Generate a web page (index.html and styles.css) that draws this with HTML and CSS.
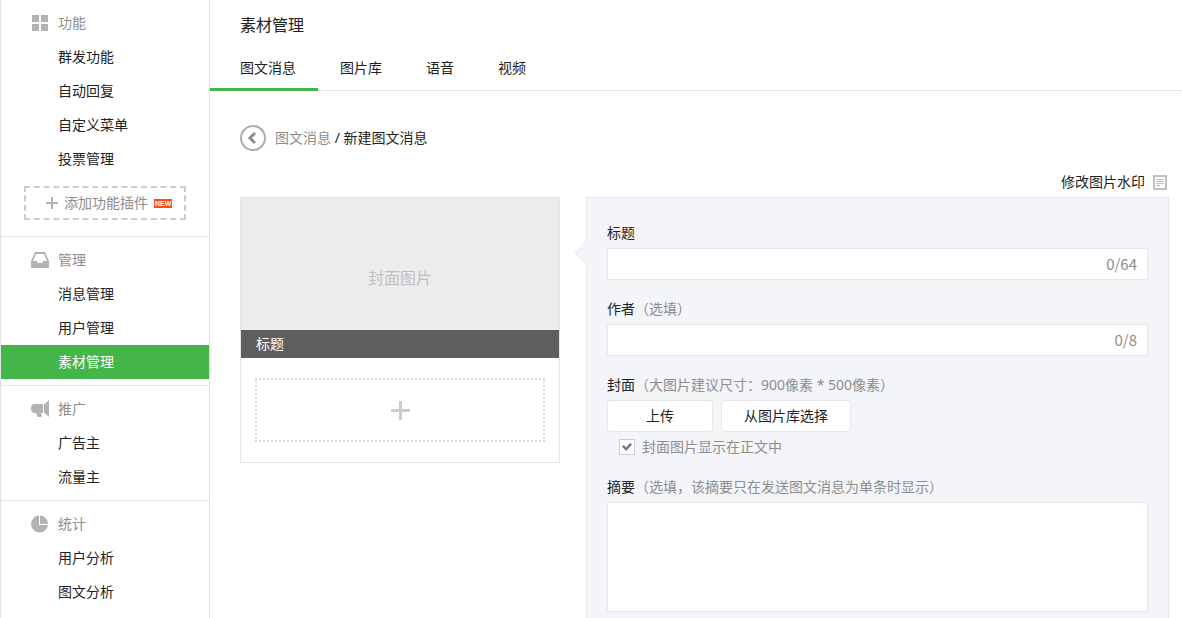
FILE: index.html
```html
<!DOCTYPE html>
<html lang="zh-CN">
<head>
<meta charset="utf-8">
<title>素材管理</title>
<meta name="viewport" content="width=device-width, initial-scale=1">
<link rel="stylesheet" href="styles.css">
</head>
<body>
<div class="layout">
  <nav class="sidebar" aria-label="主菜单">
    <section class="menu">
      <h2 class="menu-title">
        <svg class="menu-icon" viewBox="0 0 18 18" aria-hidden="true"><path d="M1 1h7v7H1zM10 1h7v7h-7zM1 10h7v7H1zM10 10h7v7h-7z"/></svg>功能
      </h2>
      <a class="menu-item" href="#">群发功能</a>
      <a class="menu-item" href="#">自动回复</a>
      <a class="menu-item" href="#">自定义菜单</a>
      <a class="menu-item" href="#">投票管理</a>
      <a class="plugin" href="#">
        <svg class="plugin-plus" viewBox="0 0 12 12" aria-hidden="true"><path d="M5 0h2v5h5v2H7v5H5V7H0V5h5z"/></svg>
        <span>添加功能插件</span>
        <span class="badge">NEW</span>
      </a>
    </section>
    <section class="menu">
      <h2 class="menu-title">
        <svg class="menu-icon" viewBox="0 0 18 18" aria-hidden="true"><path fill-rule="evenodd" d="M4 1h10l4 9v7H0v-7zM5 3L2 10h3.500l1.500 2h4l1.500-2H16l-3-7z"/></svg>管理
      </h2>
      <a class="menu-item" href="#">消息管理</a>
      <a class="menu-item" href="#">用户管理</a>
      <a class="menu-item active" href="#" aria-current="page">素材管理</a>
    </section>
    <section class="menu">
      <h2 class="menu-title">
        <svg class="menu-icon" viewBox="0 0 18 18" aria-hidden="true"><path d="M3 4h9v9h-2l1 4H7l-2-4H3C1 12.500 0 11 0 8.500S1 4.500 3 4zM13 4.500L17 1l1-1v17l-1-1-4-3.500z"/></svg>推广
      </h2>
      <a class="menu-item" href="#">广告主</a>
      <a class="menu-item" href="#">流量主</a>
    </section>
    <section class="menu">
      <h2 class="menu-title">
        <svg class="menu-icon" viewBox="0 0 18 18" aria-hidden="true"><path d="M8 .500v9.500h9A8.500 8.500 0 1 1 8 .500zM9 .500A8.500 8.500 0 0 1 17 9H9z"/></svg>统计
      </h2>
      <a class="menu-item" href="#">用户分析</a>
      <a class="menu-item" href="#">图文分析</a>
    </section>
  </nav>

  <main class="main">
    <header class="header">
      <h1 class="page-title">素材管理</h1>
      <nav class="tabs" aria-label="素材类型">
        <a class="tab current" href="#" aria-current="page">图文消息</a>
        <a class="tab" href="#">图片库</a>
        <a class="tab" href="#">语音</a>
        <a class="tab" href="#">视频</a>
      </nav>
    </header>

    <div class="content">
      <div class="breadcrumb">
        <a class="back" href="#" aria-label="返回">
          <svg viewBox="0 0 26 26" aria-hidden="true"><circle cx="13" cy="13" r="12"/><path class="chevron" d="M15 8l-5 5 5 5"/></svg>
        </a>
        <p class="crumbs"><a href="#">图文消息</a> / 新建图文消息</p>
      </div>

      <div class="watermark">
        <a href="#">修改图片水印</a>
        <svg class="doc" viewBox="0 0 14 15" aria-hidden="true"><path class="frame" d="M1 1h12v13H1z"/><path class="rows" d="M3 4.500h8M3 6.500h8M3 8.500h8M3 10.500h4"/></svg>
      </div>

      <div class="editor">
        <section class="card" aria-label="预览">
          <div class="cover">封面图片</div>
          <h3 class="card-title">标题</h3>
          <button class="add" type="button" aria-label="添加一条图文">
            <svg viewBox="0 0 19 19" aria-hidden="true"><path d="M8 0h3v8h8v3h-8v8H8v-8H0V8h8z"/></svg>
          </button>
        </section>

        <form class="panel">
          <svg class="arrow" viewBox="0 0 13 24" aria-hidden="true"><path class="arrow-fill" d="M13 0L1 12l12 12z"/><path class="arrow-line" d="M12.500 .500L1 12l11.500 11.500"/></svg>
          <div class="field">
            <label class="label" for="title">标题</label>
            <div class="box"><input id="title" type="text"><span class="count">0/64</span></div>
          </div>
          <div class="field">
            <label class="label" for="author">作者<span class="hint">（选填）</span></label>
            <div class="box"><input id="author" type="text"><span class="count">0/8</span></div>
          </div>
          <div class="field">
            <p class="label">封面<span class="hint">（大图片建议尺寸：900像素 * 500像素）</span></p>
            <div class="buttons">
              <button class="btn" type="button">上传</button>
              <button class="btn" type="button">从图片库选择</button>
            </div>
            <label class="check"><input type="checkbox" checked>封面图片显示在正文中</label>
          </div>
          <div class="field">
            <label class="label" for="summary">摘要<span class="hint">（选填，该摘要只在发送图文消息为单条时显示）</span></label>
            <textarea class="summary" id="summary"></textarea>
          </div>
        </form>
      </div>
    </div>
  </main>
</div>
</body>
</html>
```

FILE: styles.css
```css
* {
  box-sizing: border-box;
}

body,
h1,
h2,
h3,
p {
  margin: 0;
}

body {
  overflow: hidden;
  background: #fff;
  color: #222;
  font: 14px/22px "Noto Sans", "Noto Sans CJK SC", sans-serif;
}

h1,
h2,
h3 {
  font-weight: 400;
}

a {
  color: inherit;
  text-decoration: none;
}

button,
input,
textarea {
  font: inherit;
  color: inherit;
}

svg {
  display: block;
}

.layout {
  display: flex;
  height: 100vh;
  overflow: hidden;
}

/* Sidebar */
.sidebar {
  flex: 0 0 210px;
  border: solid #e1e1e4;
  border-width: 0 1px;
}

.menu {
  padding: 6px 0;
}

.menu + .menu {
  border-top: 1px solid #e7e7eb;
}

.menu-title {
  display: flex;
  align-items: center;
  gap: 9px;
  padding-left: 30px;
  color: #8d8d8d;
  font-size: 14px;
  line-height: 34px;
}

.menu-icon {
  width: 18px;
  height: 18px;
  fill: #b2b2b2;
}

.menu-item {
  display: block;
  padding-left: 57px;
  line-height: 34px;
}

.menu-item.active {
  background: #44b549;
  color: #fff;
}

.plugin {
  display: flex;
  align-items: center;
  gap: 6px;
  height: 34px;
  margin: 10px 23px;
  padding-left: 20px;
  border: 2px dashed #ccc;
  color: #8d8d8d;
}

.plugin-plus {
  width: 12px;
  height: 12px;
  fill: #b2b2b2;
}

.badge {
  padding: 0 1px;
  background: #ff4c13;
  color: #fff;
  font: bold 7px/9px "Liberation Sans", sans-serif;
}

/* Header */
.main {
  flex: 1;
  min-width: 0;
}

.header {
  padding-top: 12px;
  border-bottom: 1px solid #e7e7eb;
}

.page-title {
  padding-left: 30px;
  font-size: 16px;
  line-height: 26px;
}

.tabs {
  display: flex;
  margin: 10px 0 -1px;
}

.tab {
  padding: 0 22px;
  border-bottom: 3px solid transparent;
  line-height: 40px;
}

.tab.current {
  padding-left: 30px;
  border-color: #44b549;
}

/* Content */
.content {
  padding: 34px 13px 0 30px;
}

.breadcrumb {
  display: flex;
  align-items: center;
  gap: 9px;
}

.back svg {
  width: 26px;
  height: 26px;
  fill: none;
  stroke: #acadb0;
  stroke-width: 2;
}

.back .chevron {
  stroke: #8d8d8d;
  stroke-width: 3;
}

.crumbs a {
  color: #8d8d8d;
}

.watermark {
  display: flex;
  align-items: center;
  justify-content: flex-end;
  gap: 8px;
  padding: 20px 2px 4px 0;
}

.doc {
  width: 14px;
  height: 15px;
  fill: none;
  stroke: #c0c0c0;
}

.doc .frame {
  stroke-width: 2;
}

.editor {
  display: flex;
  align-items: flex-start;
  gap: 26px;
}

/* Preview card */
.card {
  display: flex;
  flex: 0 0 320px;
  flex-direction: column;
  border: 1px solid #e7e7eb;
}

.cover {
  padding-top: 28px;
  background: #ececec;
  color: #c0c0c0;
  font-size: 16px;
  line-height: 104px;
  text-align: center;
}

.card-title {
  padding: 0 15px;
  background: #5e5e5e;
  color: #fff;
  font-size: 14px;
  line-height: 28px;
}

.add {
  display: flex;
  align-items: center;
  justify-content: center;
  height: 64px;
  margin: 20px 14px;
  border: 2px dotted #d9dadc;
  background: none;
}

.add svg {
  width: 19px;
  height: 19px;
  fill: #ccc;
}

/* Form panel */
.panel {
  position: relative;
  display: flex;
  flex: 1;
  flex-direction: column;
  gap: 18px;
  min-width: 0;
  padding: 24px 20px 32px;
  border: 1px solid #e7e7eb;
  background: #f4f5f9;
}

.arrow {
  position: absolute;
  top: 43px;
  left: -13px;
  width: 13px;
  height: 24px;
}

.arrow-fill {
  fill: #f4f5f9;
}

.arrow-line {
  fill: none;
  stroke: #e7e7eb;
}

.field {
  display: flex;
  flex-direction: column;
  gap: 4px;
}

.hint,
.count,
.check {
  color: #8d8d8d;
}

.box {
  display: flex;
  align-items: center;
  height: 32px;
  padding: 0 10px;
  border: 1px solid #e7e7eb;
  background: #fff;
}

.box input {
  flex: 1;
  min-width: 0;
  padding: 0;
  border: 0;
  outline: 0;
  background: none;
}

.count {
  font-family: "Noto Sans CJK SC", sans-serif;
  font-size: 15px;
}

.buttons {
  display: flex;
  gap: 8px;
}

.btn {
  min-width: 106px;
  height: 32px;
  padding: 0 22px;
  border: 1px solid #e7e7eb;
  border-radius: 3px;
  background: #fff;
}

.check {
  display: flex;
  align-items: center;
  gap: 7px;
  padding-left: 12px;
}

.check input {
  width: 16px;
  height: 16px;
  margin: 0;
  border: 1px solid #d0d0d3;
  background: #fff;
  appearance: none;
}

.check input:checked::before {
  display: block;
  width: 10px;
  height: 8px;
  margin: 3px 2px;
  background: #777;
  clip-path: polygon(0 45%, 18% 25%, 40% 55%, 82% 0, 100% 18%, 42% 100%);
  content: "";
}

.summary {
  height: 110px;
  padding: 4px 10px;
  border: 1px solid #e7e7eb;
  outline: 0;
  background: #fff;
  resize: none;
}
```
